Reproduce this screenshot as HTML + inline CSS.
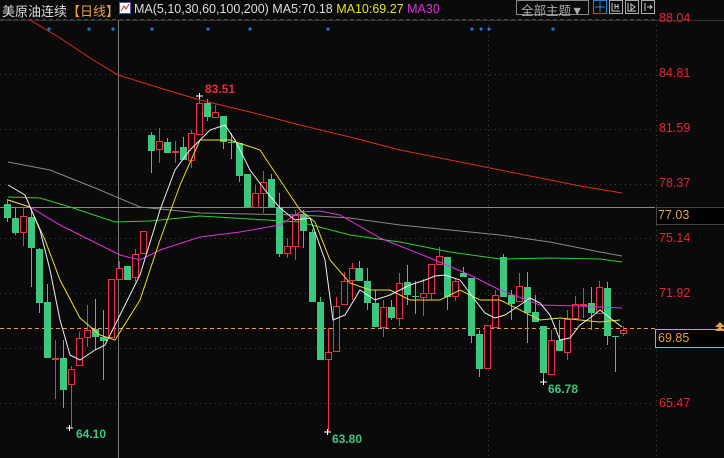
<!DOCTYPE html>
<html><head><meta charset="utf-8"><style>
html,body{margin:0;padding:0;background:#0a0a0a;width:724px;height:458px;overflow:hidden;font-family:"Liberation Sans","Noto Sans CJK SC",sans-serif}
.t{position:absolute;white-space:nowrap}
</style></head><body>
<div style="position:relative;width:724px;height:458px">
<svg id="s" width="724" height="458" style="position:absolute;left:0;top:0" xmlns="http://www.w3.org/2000/svg">
<g stroke="#444" stroke-dasharray="1,4" stroke-width="1">
<line x1="0" y1="19.5" x2="655" y2="19.5" stroke-dasharray="4,3"/>
<line x1="0" y1="74.5" x2="655" y2="74.5"/>
<line x1="0" y1="129.5" x2="655" y2="129.5"/>
<line x1="0" y1="184.5" x2="655" y2="184.5"/>
<line x1="0" y1="238.5" x2="655" y2="238.5"/>
<line x1="0" y1="293.5" x2="655" y2="293.5"/>
<line x1="0" y1="348.5" x2="655" y2="348.5"/>
<line x1="0" y1="403.5" x2="655" y2="403.5"/>
<line x1="488.5" y1="20" x2="488.5" y2="458"/>
<line x1="656.5" y1="20" x2="656.5" y2="458"/>
</g>
<line x1="0" y1="20.5" x2="724" y2="20.5" stroke="#333"/>
<line x1="118.5" y1="20" x2="118.5" y2="458" stroke="#777"/>
<line x1="0" y1="207.5" x2="655" y2="207.5" stroke="#888"/>
<line x1="0" y1="328.5" x2="655" y2="328.5" stroke="#e8a040" stroke-dasharray="4,3"/>
<g id="c"></g>
<g fill="none" stroke-width="1">
<polyline stroke="#e02828" points="30,20 60,38 90,58 118,75 160,88 200,100 250,112 300,125 350,137 400,150 450,160 500,170 550,180 580,186 622,193"/>
<polyline stroke="#888" points="8,162 50,170 100,190 140,207 200,213 300,215 350,218 400,225 450,230 500,235 550,242 600,252 622,256"/>
<polyline stroke="#2ad02a" points="8,197 40,198 70,207 115,222 150,221 200,216 250,219 300,222 350,235 400,242 450,252 500,259 550,258 600,259 622,262"/>
<polyline stroke="#e030e0" points="8,200 30,207 60,225 90,240 120,255 140,260 160,250 200,237 240,232 280,225 300,212 320,211 340,215 380,238 430,258 470,275 500,290 540,305 580,306 622,308"/>
<polyline stroke="#e8e020" points="8,200 30,207 45,240 60,280 80,318 100,335 115,340 140,300 160,240 180,185 200,140 230,140 260,150 280,180 300,210 315,222 330,260 350,283 370,290 390,290 410,300 440,300 460,290 480,300 500,300 540,320 560,318 580,320 600,322 620,320"/>
<polyline stroke="#eee" points="8,185 25,195 40,230 50,270 60,320 70,355 80,360 95,350 105,345 120,315 140,275 160,210 175,170 190,150 210,130 225,125 235,140 250,170 265,190 280,208 295,220 310,218 325,260 333,320 345,315 360,290 375,300 390,295 410,285 425,280 435,276 445,275 460,280 475,300 485,313 495,318 505,315 520,305 530,298 540,303 550,315 560,340 570,338 580,325 590,318 600,310 610,318 622,327"/>
</g>
<g fill="#1e78d0">
<circle cx="49" cy="29" r="1.6"/><circle cx="89" cy="29" r="1.6"/><circle cx="113" cy="29" r="1.6"/><circle cx="152" cy="29" r="1.6"/><circle cx="208" cy="29" r="1.6"/><circle cx="250" cy="29" r="1.6"/><circle cx="328" cy="29" r="1.6"/><circle cx="472" cy="29" r="1.6"/><circle cx="481" cy="29" r="1.6"/><circle cx="489" cy="29" r="1.6"/><circle cx="553" cy="29" r="1.6"/>
</g>
<rect x="656.5" y="207.5" width="70" height="17" fill="#000" stroke="#444"/>
<rect x="655.5" y="329.5" width="70" height="18" fill="#000" stroke="#e8a040"/>
<path d="M715 327 l5 -5 l5 5 z M715 331 l5 -5 l5 5 z" fill="#e8a040"/>
<rect x="119.5" y="2.5" width="11" height="11" fill="#fff" stroke="#4060c0"/>
<polyline points="121,11 124,6 126,9 129,4" fill="none" stroke="#e02020"/>
<rect x="516.5" y="0.5" width="72" height="14" fill="none" stroke="#888"/>
<rect x="593.5" y="0.5" width="13" height="13" fill="none" stroke="#1e88e0"/>
<path d="M600 2v10M595 7h10" stroke="#1e88e0"/>
<rect x="609.5" y="0.5" width="13" height="13" fill="none" stroke="#aaa"/>
<path d="M612 3v8h8M615 4v5M618 4v5M615 6.5h3" stroke="#ccc" fill="none"/>
<rect x="625.5" y="0.5" width="13" height="13" fill="none" stroke="#aaa"/>
<path d="M628 3v8h8M631 4l4 3l-4 3z" stroke="#ccc" fill="none"/>
<rect x="641.5" y="0.5" width="13" height="13" fill="none" stroke="#aaa"/>
<path d="M645 3v8M647 7h5M650 5l2 2l-2 2" stroke="#ccc" fill="none"/>
<path d="M196 96h7M199.5 93v6M66 428h7M69.5 425v6M324 432h7M327.5 429v6M540 382h7M543.5 379v6" stroke="#fff"/>
</svg>
<div class="t" style="left:2px;top:1px;font-size:13px;color:#ddd">美原油连续<span style="color:#e8a040">【日线】</span></div>
<div class="t" style="left:134px;top:2px;font-size:12.5px;color:#ddd">MA(5,10,30,60,100,200) MA5:70.18 <span style="color:#e8e020">MA10:69.27</span> <span style="color:#e030e0">MA30</span></div>
<div class="t" style="left:521px;top:0px;font-size:12.5px;color:#aaa">全部主题▼</div>
<div class="t" style="left:659px;top:11px;font-size:12.5px;color:#e02838">88.04</div>
<div class="t" style="left:659px;top:66px;font-size:12.5px;color:#e02838">84.81</div>
<div class="t" style="left:659px;top:121px;font-size:12.5px;color:#e02838">81.59</div>
<div class="t" style="left:659px;top:176px;font-size:12.5px;color:#e02838">78.37</div>
<div class="t" style="left:658px;top:208px;font-size:12.5px;color:#e8a040">77.03</div>
<div class="t" style="left:659px;top:231px;font-size:12.5px;color:#e02838">75.14</div>
<div class="t" style="left:659px;top:286px;font-size:12.5px;color:#e02838">71.92</div>
<div class="t" style="left:658px;top:331px;font-size:12.5px;color:#e8a040">69.85</div>
<div class="t" style="left:659px;top:396px;font-size:12.5px;color:#e02838">65.47</div>
<div class="t" style="left:205px;top:82px;font-size:12px;font-weight:bold;color:#e83040">83.51</div>
<div class="t" style="left:76px;top:427px;font-size:12px;font-weight:bold;color:#3cc880">64.10</div>
<div class="t" style="left:332px;top:432px;font-size:12px;font-weight:bold;color:#3cc880">63.80</div>
<div class="t" style="left:548px;top:382px;font-size:12px;font-weight:bold;color:#3cc880">66.78</div>
</div>
<script>
var d=[[7,'g',204,218,199,222],[15,'g',218,233,208,235],[23,'r',216,232,208,246],[31,'g',217,248,207,287],[39,'g',249,303,248,313],[47,'g',302,358,284,358],[55,'r',358,359,340,399],[63,'g',358,390,340,408],[71,'r',369,384,366,428],[79,'r',338,365,332,365],[87,'r',330,337,305,347],[95,'g',329,337,299,350],[103,'g',337,341,310,380],[111,'r',279,337,279,337],[119,'r',268,279,261,279],[127,'g',266,280,266,280],[135,'r',254,277,249,282],[143,'r',231,253,231,253],[151,'g',135,151,132,173],[159,'r',141,149,128,163],[167,'g',142,153,138,153],[175,'r',151,152,141,163],[183,'g',147,160,137,160],[191,'r',133,160,130,168],[199,'r',103,134,96,134],[207,'g',103,117,99,121],[215,'r',112,117,105,117],[223,'g',116,142,116,149],[231,'g',142,143,133,159],[239,'g',143,176,143,182],[247,'g',174,207,174,208],[255,'r',193,207,185,207],[263,'r',182,193,171,213],[271,'g',179,207,174,207],[279,'g',208,254,193,257],[287,'r',246,253,238,258],[295,'r',215,246,210,260],[303,'g',214,231,210,248],[312,'g',232,302,229,302],[320,'g',302,360,297,360],[328,'r',352,359,328,432],[336,'r',306,351,297,351],[344,'r',281,304,272,304],[352,'r',268,280,263,300],[359,'g',268,281,261,281],[367,'g',281,303,268,310],[375,'g',303,327,290,327],[383,'r',307,327,300,337],[391,'g',307,318,300,320],[399,'r',283,318,273,326],[407,'g',282,295,265,305],[415,'g',296,297,281,314],[423,'r',293,297,279,316],[431,'r',264,293,264,300],[439,'r',256,264,247,264],[447,'g',257,297,257,310],[455,'r',281,296,278,301],[463,'g',273,277,267,277],[471,'g',278,336,278,343],[479,'g',334,369,330,377],[487,'r',325,368,325,368],[495,'r',295,327,290,328],[503,'g',257,297,254,297],[511,'g',295,304,290,320],[519,'r',286,301,273,301],[527,'g',287,313,272,343],[535,'g',312,322,295,322],[543,'g',326,373,326,382],[551,'r',340,374,330,374],[559,'g',340,351,320,351],[567,'r',319,352,310,360],[575,'r',304,318,296,318],[583,'r',304,305,288,318],[591,'g',303,313,287,330],[599,'r',287,313,281,313],[607,'g',288,336,282,345],[615,'g',336,337,336,372],[623,'r',330,333,326,336]];
var h='';d.forEach(function(c){var x=c[0],r=c[1]=='r',col=r?'#f0304a':'#3cc880';h+='<line x1="'+(x+.5)+'" y1="'+c[4]+'" x2="'+(x+.5)+'" y2="'+c[5]+'" stroke="'+col+'"/>';var ht=Math.max(1,c[3]-c[2]);if(r)h+='<rect x="'+(x-2.5)+'" y="'+(c[2]+.5)+'" width="6" height="'+ht+'" fill="#0a0a0a" stroke="'+col+'"/>';else h+='<rect x="'+(x-3)+'" y="'+c[2]+'" width="7" height="'+ht+'" fill="'+col+'"/>';});
document.getElementById('c').innerHTML=h;
</script>
</body></html>
